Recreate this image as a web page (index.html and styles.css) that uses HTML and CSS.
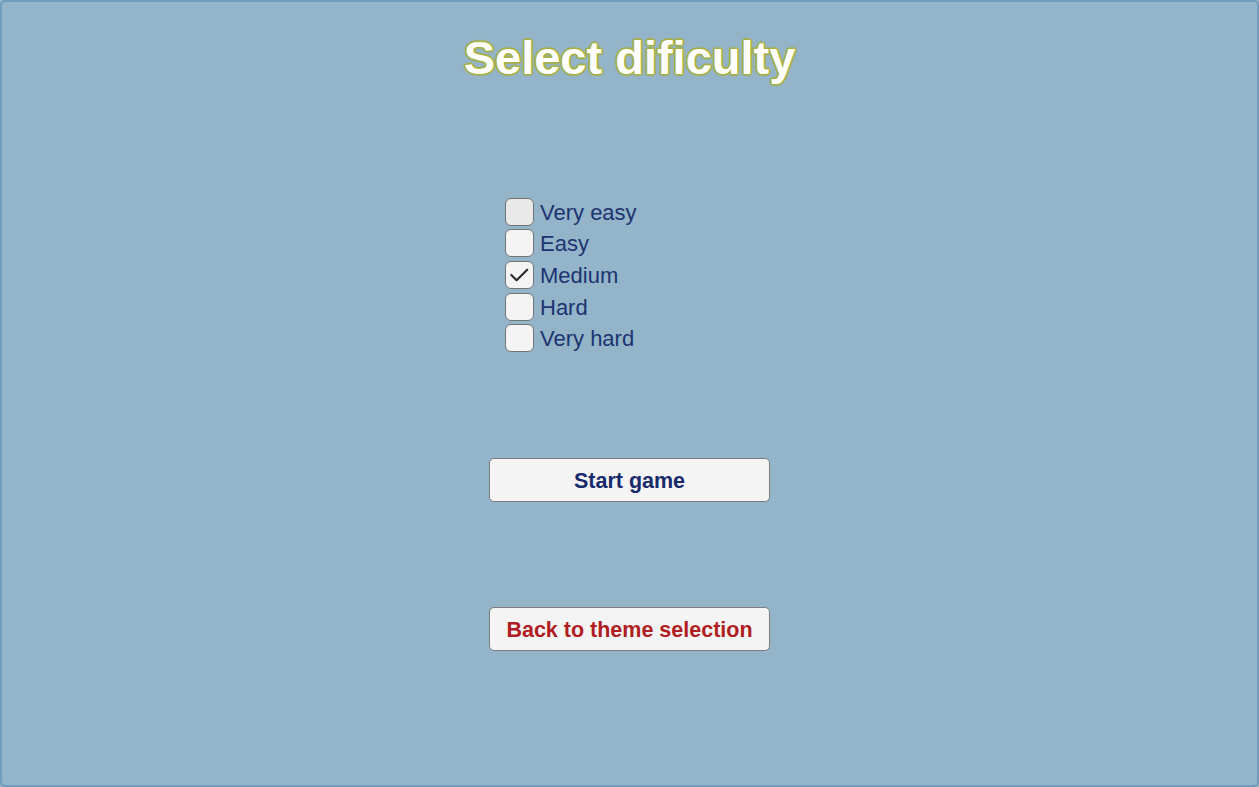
FILE: index.html
```html
<!DOCTYPE html>
<html lang="en">
<head>
<meta charset="utf-8">
<title>Select dificulty</title>
<link rel="stylesheet" href="styles.css">
</head>
<body>
<div class="frame">
  <h1 class="title">Select dificulty</h1>
  <ul class="options">
    <li class="option"><span class="box box-hover"></span><span class="label">Very easy</span></li>
    <li class="option"><span class="box"></span><span class="label">Easy</span></li>
    <li class="option"><span class="box"><svg class="check" viewBox="0 0 28 28" width="28" height="28"><path d="M5.5 14 L11 19.5 L22 8.5" fill="none" stroke="#2b2b2b" stroke-width="2.2" stroke-linecap="round" stroke-linejoin="round"/></svg></span><span class="label">Medium</span></li>
    <li class="option"><span class="box"></span><span class="label">Hard</span></li>
    <li class="option"><span class="box"></span><span class="label">Very hard</span></li>
  </ul>
  <button class="btn btn-start">Start game</button>
  <button class="btn btn-back">Back to theme selection</button>
</div>
</body>
</html>
```

FILE: styles.css
```css
html, body {
  margin: 0;
  padding: 0;
  height: 100%;
  background: #94b4ca;
}

.frame {
  box-sizing: border-box;
  height: 787px;
  width: 1259px;
  border: 2px solid #6f9dbd;
  border-radius: 5px;
  background: #94b4ca;
  display: flex;
  flex-direction: column;
  align-items: center;
  font-family: "Liberation Sans", Arial, sans-serif;
}

.title {
  margin: 29px 0 0;
  font-size: 47px;
  line-height: 53px;
  font-weight: bold;
  color: #ffffff;
  text-shadow:
    1px 0 0 #a7b03e, -1px 0 0 #a7b03e, 0 1px 0 #a7b03e, 0 -1px 0 #a7b03e,
    1px 1px 0 #a7b03e, -1px -1px 0 #a7b03e, 1px -1px 0 #a7b03e, -1px 1px 0 #a7b03e,
    2px 0 1px rgba(167,176,62,0.75), -2px 0 1px rgba(167,176,62,0.75),
    0 2px 1px rgba(167,176,62,0.75), 0 -2px 1px rgba(167,176,62,0.75);
}

.options {
  list-style: none;
  margin: 112px 0 0;
  padding: 0;
  width: 249px;
}

.option {
  display: flex;
  align-items: center;
  height: 31.6px;
  gap: 6px;
}

.box {
  box-sizing: border-box;
  width: 29px;
  height: 28px;
  border: 1.5px solid #747474;
  border-radius: 6px;
  background: #f4f4f4;
  display: flex;
  align-items: center;
  justify-content: center;
}

.box-hover {
  background: #e9e9e9;
}

.check {
  display: block;
}

.label {
  font-size: 22px;
  color: #1d3470;
  line-height: 28px;
  padding-top: 2px;
}

.btn {
  box-sizing: border-box;
  width: 281px;
  height: 44px;
  background: #f4f4f4;
  border: 1.5px solid #7c7c7c;
  border-radius: 5px;
  font-family: "Liberation Sans", Arial, sans-serif;
  font-size: 21.5px;
  font-weight: bold;
  padding: 3px 0 0;
}

.btn-start {
  margin-top: 104px;
  color: #172a6b;
}

.btn-back {
  margin-top: 105px;
  color: #b01d22;
}
```
